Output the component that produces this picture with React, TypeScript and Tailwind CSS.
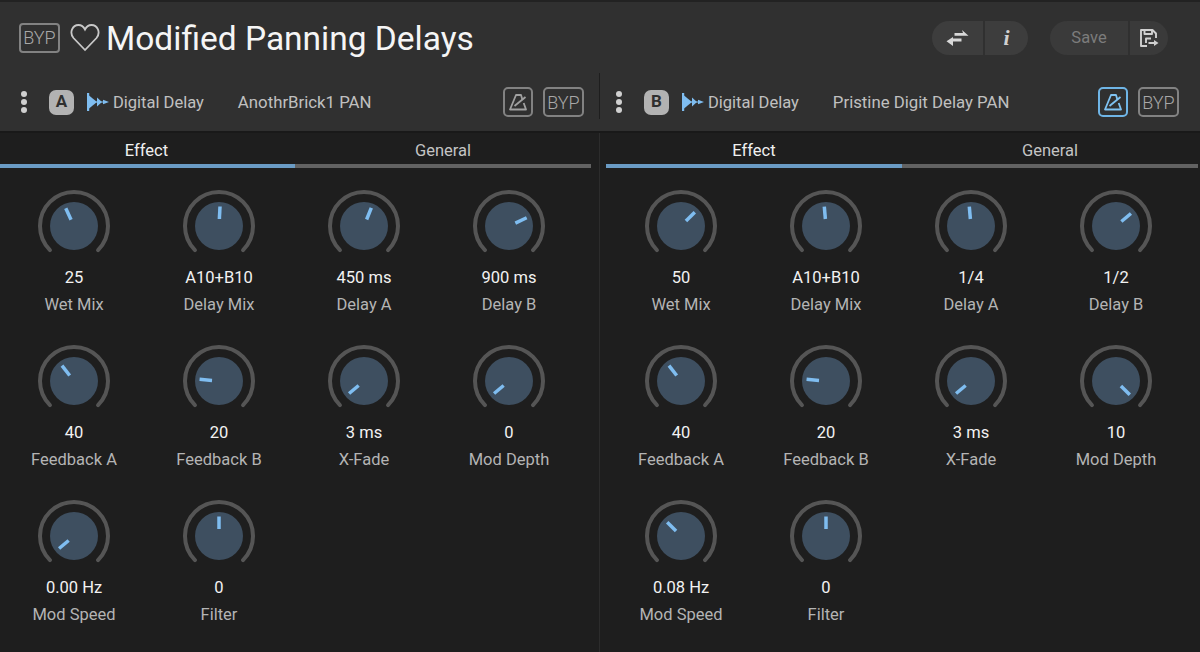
const font = "font-['Roboto',sans-serif]";

function Knob({ angle }: { angle: number }) {
  const r = 34;
  const a = (d: number) => [40 + r * Math.sin((d * Math.PI) / 180), 40 - r * Math.cos((d * Math.PI) / 180)];
  const [x1, y1] = a(-135);
  const [x2, y2] = a(135);
  return (
    <svg width="80" height="80" viewBox="0 0 80 80" className="block">
      <path d={`M${x1} ${y1} A${r} ${r} 0 1 1 ${x2} ${y2}`} fill="none" stroke="#555555" strokeWidth="4" strokeLinecap="round" />
      <circle cx="40" cy="40" r="24" fill="#3e4f60" />
      <line x1="40" y1="33" x2="40" y2="20.5" transform={`rotate(${angle} 40 40)`} stroke="#7fbdf0" strokeWidth="3.5" />
    </svg>
  );
}

function Param({ value, label, angle }: { value: string; label: string; angle: number }) {
  return (
    <div className="flex h-[155px] flex-col items-center">
      <Knob angle={angle} />
      <div className="mt-[1px] text-[16.5px] leading-[22px] text-[#f2f2f2]">{value}</div>
      <div className="mt-[5px] text-[16.5px] leading-[22px] text-[#b4b4b4]">{label}</div>
    </div>
  );
}

function Metronome({ active }: { active?: boolean }) {
  const c = active ? "#7fc3f2" : "#a0a0a0";
  return (
    <div className={`flex h-[30px] w-[30px] items-center justify-center rounded-[5px] border-2 ${active ? "border-[#6fb5e6]" : "border-[#828282]"}`}>
      <svg width="20" height="20" viewBox="0 0 20 20" fill="none" stroke={c} strokeWidth="1.8" strokeLinejoin="round">
        <path d="M14.5 8 L13 3 H8 L2 17.5 H18 L15.7 11" />
        <path d="M6.5 14 L17.5 5" />
      </svg>
    </div>
  );
}

function Dots() {
  return (
    <div className="flex flex-col gap-[2px]">
      <span className="h-[6px] w-[6px] rounded-full bg-[#d0d0d0]" />
      <span className="h-[6px] w-[6px] rounded-full bg-[#d0d0d0]" />
      <span className="h-[6px] w-[6px] rounded-full bg-[#d0d0d0]" />
    </div>
  );
}

function Wave() {
  return (
    <svg width="22" height="18" viewBox="0 0 22 18" fill="#7fbdf0">
      <rect x="0" y="0" width="2.2" height="18" />
      <path d="M2 2.5 L10 9 L2 15.5 Z" />
      <path d="M10 4.5 L15 9 L10 13.5 Z" />
      <path d="M16 6.8 L22 9 L16 11.2 Z" />
      <rect x="8" y="8.5" width="10" height="1" />
    </svg>
  );
}

function SlotHeader({ letter, preset, active }: { letter: string; preset: string; active?: boolean }) {
  return (
    <div className="mt-[14px] flex h-[30px] items-center">
      <Dots />
      <div className="ml-[22px] flex h-[25px] w-[25px] items-center justify-center rounded-[7px] bg-[#b2b2b2] text-[17px] font-bold text-[#2f2f2f]">{letter}</div>
      <div className="ml-[13px]"><Wave /></div>
      <span className="mt-[2px] ml-[4px] text-[16.5px] text-[#c0c0c0]">Digital Delay</span>
      <span className="mt-[2px] ml-[34px] text-[16.8px] text-[#c0c0c0]">{preset}</span>
      <div className="ml-auto flex items-center gap-[10px]">
        <Metronome active={active} />
        <div className="flex h-[30px] w-[41px] items-center justify-center rounded-[5px] border-2 border-[#828282] text-[18px] font-light text-[#a8a8a8]">BYP</div>
      </div>
    </div>
  );
}

function Tabs({ className, first }: { className: string; first: string }) {
  return (
    <div className={`flex h-[35px] ${className}`}>
      <div className={`${first} border-b-4 border-[#6a9bc4] pt-[7px] text-center text-[16.5px] leading-[22px] text-[#f0f0f0]`}>Effect</div>
      <div className="flex-1 border-b-4 border-[#626262] pt-[7px] text-center text-[16.5px] leading-[22px] text-[#c4c4c4]">General</div>
    </div>
  );
}

type P = [string, string, number];
const A: P[] = [
  ["25", "Wet Mix", -25], ["A10+B10", "Delay Mix", 3], ["450 ms", "Delay A", 22], ["900 ms", "Delay B", 65],
  ["40", "Feedback A", -38], ["20", "Feedback B", -85], ["3 ms", "X-Fade", -130], ["0", "Mod Depth", -130],
  ["0.00 Hz", "Mod Speed", -130], ["0", "Filter", 0],
];
const B: P[] = [
  ["50", "Wet Mix", 45], ["A10+B10", "Delay Mix", -5], ["1/4", "Delay A", -5], ["1/2", "Delay B", 50],
  ["40", "Feedback A", -38], ["20", "Feedback B", -85], ["3 ms", "X-Fade", -130], ["10", "Mod Depth", 135],
  ["0.08 Hz", "Mod Speed", -45], ["0", "Filter", 0],
];

function Grid({ items, className }: { items: P[]; className: string }) {
  return (
    <div className={`grid grid-cols-[repeat(4,145px)] pt-[18px] ${className}`}>
      {items.map((p, i) => <Param key={i} value={p[0]} label={p[1]} angle={p[2]} />)}
    </div>
  );
}

export default function App() {
  return (
    <div className={`flex h-[652px] w-[1200px] flex-col overflow-hidden bg-[#1e1e1e] ${font}`}>
      <div className="box-content h-[129px] shrink-0 border-t-2 border-b-2 border-t-[#222222] border-b-[#191919] bg-[#303030]">
        <div className="flex h-[71px] items-center pl-[19px]">
          <div className="flex h-[30px] w-[41px] items-center justify-center rounded-[4px] border-2 border-[#828282] text-[18px] font-light text-[#a8a8a8]">BYP</div>
          <svg className="ml-[10px]" width="30" height="29" viewBox="0 0 30 29" fill="none" stroke="#c8c8c8" strokeWidth="1.8">
            <path d="M15 27 L3.5 15 C-1 9.5 2.5 2 8.5 2 C11.5 2 13.5 3.5 15 6.5 C16.5 3.5 18.5 2 21.5 2 C27.5 2 31 9.5 26.5 15 Z" />
          </svg>
          <h1 className="mt-[2px] ml-[6px] text-[33.5px] leading-none text-[#f5f5f5]">Modified Panning Delays</h1>
          <div className="ml-auto flex items-center gap-[22px] pr-[32px]">
            <div className="flex h-[34px] w-[96px] overflow-hidden rounded-full bg-[#3d3d3d]">
              <div className="flex w-[53px] items-center justify-center border-r-2 border-[#303030]">
                <svg width="24" height="18" viewBox="0 0 24 18" fill="#d8d8d8">
                  <path d="M8.5 4 H17 L16 1 L22.5 6.8 H8.5 Z" />
                  <path d="M15.5 9.5 H7 V8 L0.5 12.3 L7 17 V12.5 H15.5 Z" />
                </svg>
              </div>
              <div className="flex flex-1 items-center justify-center font-['Liberation_Serif',serif] text-[22px] font-bold italic text-[#d0d0d0]">i</div>
            </div>
            <div className="flex h-[34px] w-[118px] overflow-hidden rounded-full bg-[#3a3a3a]">
              <div className="flex w-[80px] items-center justify-center border-r-2 border-[#303030] pt-[2px] text-[16.5px] text-[#7c7c7c]">Save</div>
              <div className="flex flex-1 items-center justify-center">
                <svg width="20" height="20" viewBox="0 0 20 20" fill="none" stroke="#d0d0d0" strokeWidth="1.9" strokeLinejoin="round">
                  <path d="M8 18 H2 V2 H13.5 L17 5.5 V10" />
                  <path d="M5.5 2 V6 H13 V2" />
                  <path d="M7 15 V10.5 H12" />
                  <path d="M9.5 15 H16" />
                  <path d="M15 12 L19.5 15 L15 18 Z" fill="#d0d0d0" stroke="none" />
                </svg>
              </div>
            </div>
          </div>
        </div>
        <div className="flex h-[58px]">
          <div className="h-[46px] w-[600px] border-r border-[#1e1e1e] pr-[15px] pl-[21px]"><SlotHeader letter="A" preset="AnothrBrick1 PAN" /></div>
          <div className="h-[46px] w-[600px] pr-[21px] pl-[16px]"><SlotHeader letter="B" preset="Pristine Digit Delay PAN" active /></div>
        </div>
      </div>
      <div className="flex flex-1">
        <div className="w-[600px] border-r border-[#2c2c2c]">
          <Tabs className="mr-[8px]" first="w-[295px] pr-[2px]" />
          <Grid items={A} className="pl-[1.5px]" />
        </div>
        <div className="w-[600px]">
          <Tabs className="mr-[2px] ml-[6px]" first="w-[296px]" />
          <Grid items={B} className="pl-[8.5px]" />
        </div>
      </div>
    </div>
  );
}
